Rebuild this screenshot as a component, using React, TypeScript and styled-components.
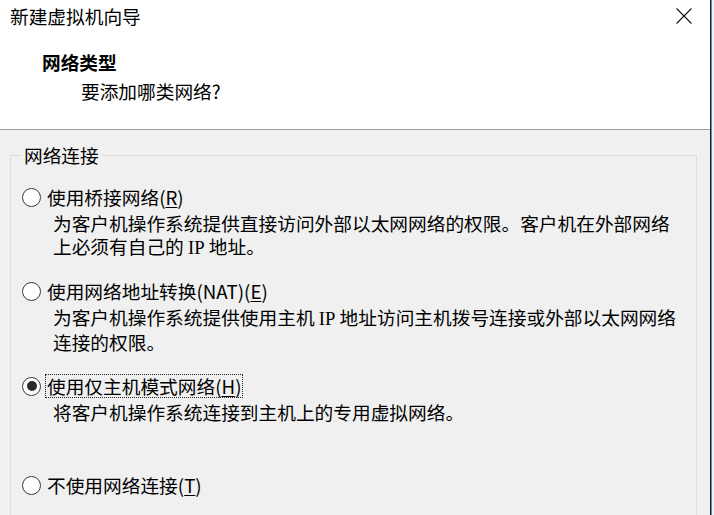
import styled, { createGlobalStyle } from 'styled-components';

interface IOption {
  label: string;
  mnemonic: string;
  lines: string[];
  checked?: boolean;
  after: number;
}

const options: IOption[] = [
  {
    label: '使用桥接网络',
    mnemonic: 'R',
    lines: [
      '为客户机操作系统提供直接访问外部以太网网络的权限。客户机在外部网络',
      '上必须有自己的 IP 地址。',
    ],
    after: 20,
  },
  {
    label: '使用网络地址转换(NAT)',
    mnemonic: 'E',
    lines: [
      '为客户机操作系统提供使用主机 IP 地址访问主机拨号连接或外部以太网网络',
      '连接的权限。',
    ],
    after: 21,
  },
  {
    label: '使用仅主机模式网络',
    mnemonic: 'H',
    lines: ['将客户机操作系统连接到主机上的专用虚拟网络。'],
    checked: true,
    after: 50,
  },
  {
    label: '不使用网络连接',
    mnemonic: 'T',
    lines: [],
    after: 0,
  },
];

// "IP" is drawn in a serif face in the original dialog
function renderLine(line: string) {
  const parts = line.split('IP');
  return parts.map((part, i) => (
    <span key={i}>
      {part}
      {i < parts.length - 1 && <Serif>IP</Serif>}
    </span>
  ));
}

export default function App() {
  return (
    <>
      <GlobalStyle />
      <Window>
        <Main>
          <Header>
            <TitleBar>
              <Title>新建虚拟机向导</Title>
              <CloseButton aria-label="关闭">
                <svg width="16" height="16" viewBox="0 0 16 16">
                  <path d="M0.5 0.5 L15.5 15.5 M15.5 0.5 L0.5 15.5" stroke="#111" strokeWidth="1.1" fill="none" />
                </svg>
              </CloseButton>
            </TitleBar>
            <Heading>网络类型</Heading>
            <SubHeading>要添加哪类网络?</SubHeading>
          </Header>

          <Body>
            <Group>
              <Legend>网络连接</Legend>
              {options.map((opt) => (
                <Option key={opt.mnemonic} $after={opt.after}>
                  <Row>
                    <Radio $checked={!!opt.checked} />
                    <Label $focused={!!opt.checked}>
                      {opt.label}(<u>{opt.mnemonic}</u>)
                    </Label>
                  </Row>
                  {opt.lines.length > 0 && (
                    <Description>
                      {opt.lines.map((line) => (
                        <Line key={line}>{renderLine(line)}</Line>
                      ))}
                    </Description>
                  )}
                </Option>
              ))}
            </Group>
          </Body>
        </Main>
        <Edge />
      </Window>
    </>
  );
}

const GlobalStyle = createGlobalStyle`
  html, body {
    margin: 0;
    padding: 0;
    background: #f0f0f0;
  }

  body {
    font-family: "Noto Sans CJK SC", "Noto Sans", sans-serif;
    font-size: 18.7px;
    color: #000;
  }
`;

const Window = styled.div`
  width: 714px;
  height: 515px;
  display: flex;
  overflow: hidden;
  background: #f0f0f0;
`;

const Main = styled.div`
  flex: 1;
  display: flex;
  flex-flow: column;
  min-width: 0;
`;

const Edge = styled.div`
  width: 4px;
  background: linear-gradient(
    to right,
    #1c1c1c 0 1px,
    #5b8fd0 1px 2px,
    #f0f0f0 2px
  );
`;

const Header = styled.div`
  height: 129px;
  flex-shrink: 0;
  background: #fff;
  border-bottom: 1px solid #a0a0a0;
`;

const TitleBar = styled.div`
  height: 32px;
  display: flex;
  align-items: center;
  justify-content: space-between;
  padding: 0 3px 0 10px;
`;

const Title = styled.span`
  line-height: 24px;
`;

const CloseButton = styled.div`
  width: 46px;
  height: 32px;
  display: flex;
  align-items: center;
  justify-content: center;
`;

const Heading = styled.div`
  margin-top: 18px;
  padding-left: 42px;
  line-height: 24px;
  font-weight: bold;
`;

const SubHeading = styled.div`
  margin-top: 5px;
  padding-left: 81px;
  line-height: 24px;
`;

const Body = styled.div`
  flex: 1;
  padding: 15px 13px 0 10px;
`;

const Group = styled.fieldset`
  margin: 0;
  padding: 20px 0 0 11px;
  min-height: 400px;
  border: 1px solid #dcdcdc;
  display: flex;
  flex-flow: column;
`;

const Legend = styled.legend`
  margin-left: -1px;
  padding: 0 3px;
  line-height: 20px;
`;

const Option = styled.div<{ $after: number }>`
  display: flex;
  flex-flow: column;
  margin-bottom: ${(p) => p.$after}px;
`;

const Row = styled.div`
  height: 24px;
  display: flex;
  align-items: center;
  gap: 5px;
`;

const Radio = styled.span<{ $checked: boolean }>`
  position: relative;
  width: 19px;
  height: 19px;
  box-sizing: border-box;
  border-radius: 50%;
  border: 1.5px solid #3a3a3a;
  background: #fff;
  flex-shrink: 0;

  &::after {
    content: '';
    display: ${(p) => (p.$checked ? 'block' : 'none')};
    position: absolute;
    inset: 3.5px;
    border-radius: 50%;
    background: #2b2b2b;
  }
`;

const Label = styled.span<{ $focused: boolean }>`
  padding: 0 1px;
  line-height: 22px;
  outline: ${(p) => (p.$focused ? '1px dotted #222' : 'none')};
  white-space: nowrap;

  u {
    text-underline-offset: 2px;
  }
`;

const Description = styled.div`
  margin-top: 2px;
  padding-left: 31px;
`;

const Line = styled.div`
  line-height: 23px;
  white-space: nowrap;
`;

const Serif = styled.span`
  font-family: "Liberation Serif", serif;
`;
